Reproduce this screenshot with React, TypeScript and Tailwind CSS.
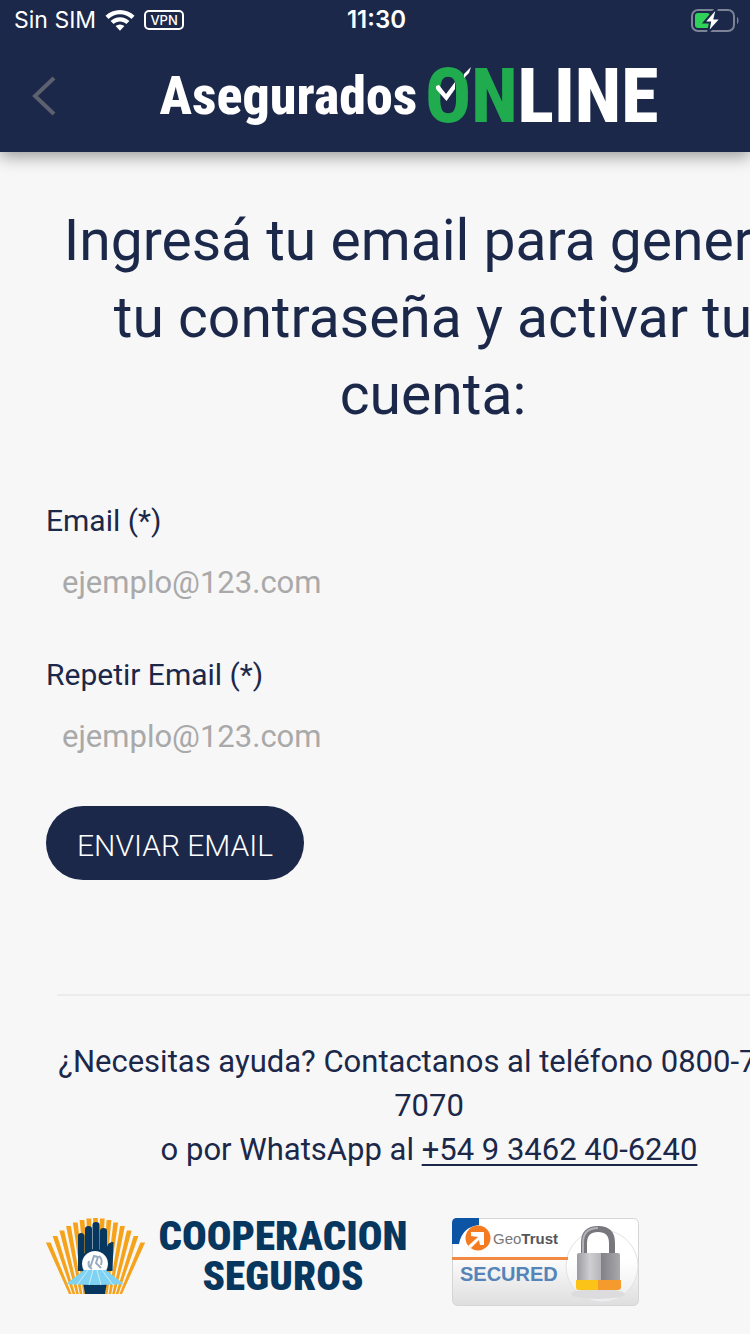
import React from "react";

function WifiIcon() {
  return (
    <svg viewBox="0 0 30 22" className="h-[22px] w-[30px]" aria-hidden="true">
      <path
        d="M15 1C9.500 1 4.300 3.200.500 6.800l3 3.100C6.600 7 10.600 5.300 15 5.300S23.400 7 26.500 9.900l3-3.100C25.700 3.200 20.500 1 15 1z"
        fill="#fff"
      />
      <path
        d="M15 8.300c-3.600 0-6.900 1.400-9.400 3.700l3 3.100c1.700-1.500 3.900-2.500 6.400-2.500s4.700 1 6.400 2.500l3-3.100C21.900 9.700 18.600 8.300 15 8.300z"
        fill="#fff"
      />
      <path d="M10.600 17.100L15 21.700l4.400-4.600a6.600 6.600 0 0 0-8.800 0z" fill="#fff" />
    </svg>
  );
}

function BatteryIcon() {
  return (
    <svg viewBox="0 0 50 26" className="h-[26px] w-[50px]" aria-hidden="true">
      <rect x="3" y="3" width="42" height="21" rx="6" fill="none" stroke="#7c8397" strokeWidth="2" />
      <path d="M48 10v7c2-.8 2-6.200 0-7z" fill="#7c8397" />
      <rect x="6" y="6" width="15" height="15" rx="3" fill="#30d158" />
      <path d="M26.500 2L15 15.500h6L19 26l13-14.500h-6.500L28 1z" fill="#fff" stroke="#1b284a" strokeWidth="2" />
    </svg>
  );
}

function StatusBar() {
  return (
    <div className="grid h-10 grid-cols-3 items-center pl-[14px] pr-[11px] font-[Inter,sans-serif] text-[23px] leading-10">
      <div className="flex items-center gap-[9px]">
        <span className="whitespace-nowrap">Sin SIM</span>
        <WifiIcon />
        <span className="flex h-5 w-10 items-center justify-center rounded-[5px] border-2 border-white text-[13px] font-medium leading-none">
          VPN
        </span>
      </div>
      <span className="text-center text-[24px] font-semibold">11:30</span>
      <div className="flex justify-end">
        <BatteryIcon />
      </div>
    </div>
  );
}

function Brand() {
  return (
    <div className="flex flex-1 items-center justify-center gap-2 whitespace-nowrap font-['Roboto_Condensed','Liberation_Sans_Narrow',sans-serif] font-extrabold leading-none">
      <span className="text-[54px]">Asegurados</span>
      <span className="text-[76px]">
        <span className="relative text-[#1fab4e]">
          ON
          <svg viewBox="0 0 40 40" className="absolute left-[8px] top-[14px] h-10 w-10" aria-hidden="true">
            <path d="M3 21l3-1 7 9 9-12v7l-8.500 12L3 24z" fill="#fff" />
            <path d="M31 9l7-7-2 6-5 5z" fill="#fff" />
          </svg>
        </span>
        LINE
      </span>
    </div>
  );
}

function EmailField({ id, label }: { id: string; label: string }) {
  return (
    <div className="flex flex-col">
      <label htmlFor={id} className="text-[30px] leading-[48px]">
        {label}
      </label>
      <input
        id={id}
        type="email"
        placeholder="ejemplo@123.com"
        className="h-[74px] w-full bg-transparent pl-4 text-[31px] outline-none placeholder:text-[#a9a9a9]"
      />
    </div>
  );
}

const rays = Array.from({ length: 15 }, (_, i) => {
  const n = i - 7;
  return { bottom: 49.5 + n * 3.6, top: 49.5 + n * 6.75, y: 1 + n * n * 0.5 };
});

function CooperacionMark() {
  return (
    <svg viewBox="0 0 100 78" className="h-[78px] w-[100px] shrink-0" aria-hidden="true">
      {rays.map((r, i) => (
        <path
          key={i}
          d={`M${r.top - 2.4} ${r.y}L${r.top + 2.4} ${r.y}L${r.bottom + 1.3} 77L${r.bottom - 1.3} 77z`}
          fill="#f6a31c"
        />
      ))}
      <g fill="#07365f">
        <path d="M32 54V19q0-3 3-3t3.500 3v35z" />
        <path d="M39 45V12q0-3 3.500-3t3.500 3v33z" />
        <path d="M46.500 42V8q0-3 3.500-3t3.500 3v34z" />
        <path d="M54 44V14q0-3 3.500-3t3.500 3v32z" />
        <path d="M61 54V30q1-5 6.500-5l-1 29z" />
        <path d="M37 65h24l-2 12H39z" />
      </g>
      <circle cx="49" cy="47" r="15" fill="#07365f" />
      <circle cx="49" cy="47" r="13" fill="#fff" />
      <path d="M44 51l4-12 4 1-2 6 5 5M43 44q-2 5 3 8M53 39q4 3 2 9" fill="none" stroke="#9aabc0" strokeWidth="2" />
      <path d="M38 53h22l18 14q-29 2-58 0z" fill="#7fd2f2" />
      <path d="M42 53L31 68M47 53l-4 15M51 53l4 15M56 53l11 15" stroke="#c9edfa" strokeWidth="1" />
    </svg>
  );
}

function CooperacionLogo() {
  return (
    <div className="flex items-center gap-3">
      <CooperacionMark />
      <div className="flex w-[250px] flex-col items-center whitespace-nowrap font-['Roboto_Condensed','Liberation_Sans_Narrow',sans-serif] text-[41px] font-black leading-[40px] text-[#07365f]">
        <span>COOPERACION</span>
        <span>SEGUROS</span>
      </div>
    </div>
  );
}

function GeoTrustSeal() {
  return (
    <svg viewBox="0 0 187 90" className="h-[90px] w-[187px] shrink-0" role="img" aria-label="GeoTrust Secured">
      <defs>
        <linearGradient id="seal" x1="0" y1="0" x2="0" y2="1">
          <stop offset="0.4" stopColor="#fff" />
          <stop offset="1" stopColor="#dedede" />
        </linearGradient>
        <linearGradient id="steel" x1="0" y1="0" x2="1" y2="0">
          <stop offset="0" stopColor="#9b9b9f" />
          <stop offset="0.3" stopColor="#cfcfd2" />
          <stop offset="0.55" stopColor="#b6b6ba" />
          <stop offset="0.57" stopColor="#818187" />
          <stop offset="1" stopColor="#a9a9ad" />
        </linearGradient>
        <linearGradient id="glow" x1="0" y1="0" x2="0" y2="1">
          <stop offset="0.4" stopColor="#fff" />
          <stop offset="1" stopColor="#ececec" />
        </linearGradient>
      </defs>
      <rect x="0.500" y="2.500" width="186" height="87" rx="5" fill="url(#seal)" stroke="#d5d5d8" />
      <path d="M0 28V7q0-5 5-5h22v7Q10 11 7 28z" fill="#0b55a4" />
      <circle cx="26" cy="22" r="12.500" fill="#f47b20" />
      <path d="M16 30l10-9-7-1v-4h13v13h-4l-1-5-8 8z" fill="#fff" />
      <text x="41" y="28" fontFamily="Liberation Sans" fontSize="15" fill="#77777b">
        Geo<tspan fontWeight="700" fill="#55555a">Trust</tspan>
      </text>
      <circle cx="150" cy="50" r="36" fill="url(#glow)" stroke="#e2e2e4" />
      <rect x="0" y="41" width="116" height="3" fill="#f08a45" />
      <text x="8" y="65" fontFamily="Liberation Sans" fontSize="20" fontWeight="700" fill="#5584b8">
        SECURED
      </text>
      <ellipse cx="146" cy="78" rx="27" ry="5" fill="#dcdcdf" />
      <path d="M132 39V27q0-14 14-14t14 14v12" fill="none" stroke="#77777d" strokeWidth="6" />
      <path d="M131 39V27q0-15 15-15" fill="none" stroke="#b2b2b7" strokeWidth="2" />
      <rect x="125" y="37" width="43" height="31" rx="2" fill="url(#steel)" />
      <path d="M124 64h22v10h-20q-2 0-2-3z" fill="#fbc318" />
      <path d="M146 64h23v7q0 3-3 3h-20z" fill="#f59a2c" />
    </svg>
  );
}

export default function App() {
  return (
    <div className="flex min-h-screen flex-col overflow-x-hidden bg-[#f7f7f7] font-[Roboto,sans-serif] text-[#1b284a]">
      <header className="relative bg-[#1b284a] text-white shadow-[0_4px_16px_rgba(0,0,0,0.4)]">
        <StatusBar />
        <div className="flex h-28 items-center pl-8">
          <button type="button" aria-label="Volver" className="flex h-11 w-9 items-center">
            <svg viewBox="0 0 24 40" className="h-10 w-6" aria-hidden="true">
              <path d="M22 2L3 20l19 18" fill="none" stroke="#5c606f" strokeWidth="4" />
            </svg>
          </button>
          <Brand />
        </div>
      </header>

      <main className="flex flex-col pb-6 pl-[46px] pt-[50px]">
        <h1 className="-mr-[70px] text-center text-[57px] leading-[77px]">
          <span className="block whitespace-nowrap">Ingresá tu email para generar</span>
          <span className="block whitespace-nowrap">tu contraseña y activar tu</span>
          <span className="block">cuenta:</span>
        </h1>

        <form className="mt-16 flex flex-col items-start" onSubmit={(e) => e.preventDefault()}>
          <div className="flex w-full flex-col gap-8">
            <EmailField id="email" label="Email (*)" />
            <EmailField id="email-repeat" label="Repetir Email (*)" />
          </div>
          <button
            type="submit"
            className="mt-[33px] h-[74px] whitespace-nowrap rounded-full bg-[#1b284a] px-[31px] pt-1 text-[30px] font-light text-white"
          >
            ENVIAR EMAIL
          </button>
        </form>

        <footer className="mt-[114px]">
          <hr className="-mr-[51px] ml-[11px] border-t-2 border-[#ececec]" />
          <p className="-mr-[51px] ml-[11px] mt-11 text-center text-[31px] leading-[44px]">
            <span className="block whitespace-nowrap">¿Necesitas ayuda? Contactanos al teléfono 0800-777-</span>
            <span className="block">7070</span>
            <span className="block whitespace-nowrap">
              o por WhatsApp al{" "}
              <a href="https://wa.me/5493462406240" className="underline decoration-2 underline-offset-4">
                +54 9 3462 40-6240
              </a>
            </span>
          </p>
          <div className="mt-11 flex items-start gap-11">
            <CooperacionLogo />
            <GeoTrustSeal />
          </div>
        </footer>
      </main>
    </div>
  );
}
